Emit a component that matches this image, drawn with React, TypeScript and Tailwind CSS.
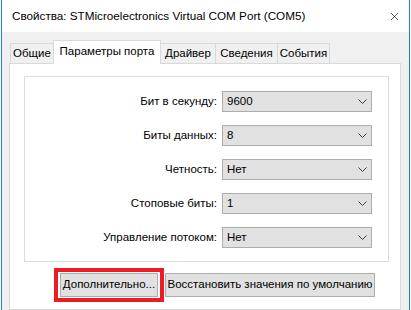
import { X } from "lucide-react";

const rows = [
  { label: "Бит в секунду:", value: "9600" },
  { label: "Биты данных:", value: "8" },
  { label: "Четность:", value: "Нет" },
  { label: "Стоповые биты:", value: "1" },
  { label: "Управление потоком:", value: "Нет" },
];

function Chevron() {
  return (
    <svg width="9" height="5" viewBox="0 0 9 5" className="shrink-0">
      <path d="M0.5 0.5 L4.5 4.5 L8.5 0.5" fill="none" stroke="#3c3c3c" strokeWidth="1" />
    </svg>
  );
}

function Combo({ value }: { value: string }) {
  return (
    <div className="flex h-[21px] w-[150px] items-center justify-between border border-[#adadad] bg-[#e1e1e1] pl-[4px] pr-[4px]">
      <span>{value}</span>
      <Chevron />
    </div>
  );
}

export default function App() {
  return (
    <div
      className="h-[310px] w-[411px] overflow-hidden whitespace-nowrap bg-white text-[11.5px] leading-none text-black"
      style={{ fontFamily: '"Liberation Sans", Arial, sans-serif' }}
    >
      <div className="ml-[1px] flex h-[310px] w-[409px] flex-col border-x border-[#1883d7]">
        {/* title bar */}
        <div className="flex h-[32px] shrink-0 items-center justify-between bg-white pl-[10px] pr-[8px]">
          <span className="text-[11.7px]">Свойства: STMicroelectronics Virtual COM Port (COM5)</span>
          <X size={13} strokeWidth={1.2} className="text-black" />
        </div>

        <div className="flex flex-1 flex-col bg-[#f0f0f0] pt-[8px]">
          {/* tabs */}
          <div className="relative z-10 ml-[8px] flex h-[23px] items-end">
            <div className="flex h-[20px] w-[44px] items-center justify-center border border-b-0 border-[#d9d9d9] bg-[#f0f0f0]">
              Общие
            </div>
            <div className="-mb-px -ml-[1px] flex h-[24px] w-[108px] items-center justify-center border border-b-0 border-[#d9d9d9] bg-white pb-[2px]">
              Параметры порта
            </div>
            <div className="-ml-[1px] flex h-[20px] w-[56px] items-center justify-center border border-b-0 border-[#d9d9d9] bg-[#f0f0f0]">
              Драйвер
            </div>
            <div className="-ml-[1px] flex h-[20px] w-[63px] items-center justify-center border border-b-0 border-[#d9d9d9] bg-[#f0f0f0]">
              Сведения
            </div>
            <div className="-ml-[1px] flex h-[20px] w-[53px] items-center justify-center border border-b-0 border-[#d9d9d9] bg-[#f0f0f0]">
              События
            </div>
          </div>

          {/* tab panel */}
          <div className="ml-[7px] flex w-[392px] flex-1 flex-col border border-[#d9d9d9] bg-white">
            <div className="ml-[14px] mt-[12px] flex h-[186px] w-[365px] flex-col gap-[13px] border border-[#dcdcdc] pt-[14px]">
              {rows.map((r) => (
                <div key={r.label} className="flex items-center">
                  <div className="w-[197px] pr-[5px] text-right">{r.label}</div>
                  <Combo value={r.value} />
                </div>
              ))}
            </div>

            <div className="ml-[44px] mt-[6px] flex items-start">
              <div className="border-4 border-[#ed1c24] px-[2px] py-[1px]">
                <div className="flex h-[24px] w-[98px] items-center justify-center border border-[#adadad] bg-[#e1e1e1]">
                  Дополнительно...
                </div>
              </div>
              <div className="ml-[1px] mt-[5px] flex h-[24px] w-[210px] items-center justify-center border border-[#adadad] bg-[#e1e1e1]">
                Восстановить значения по умолчанию
              </div>
            </div>
          </div>
        </div>
      </div>
    </div>
  );
}
